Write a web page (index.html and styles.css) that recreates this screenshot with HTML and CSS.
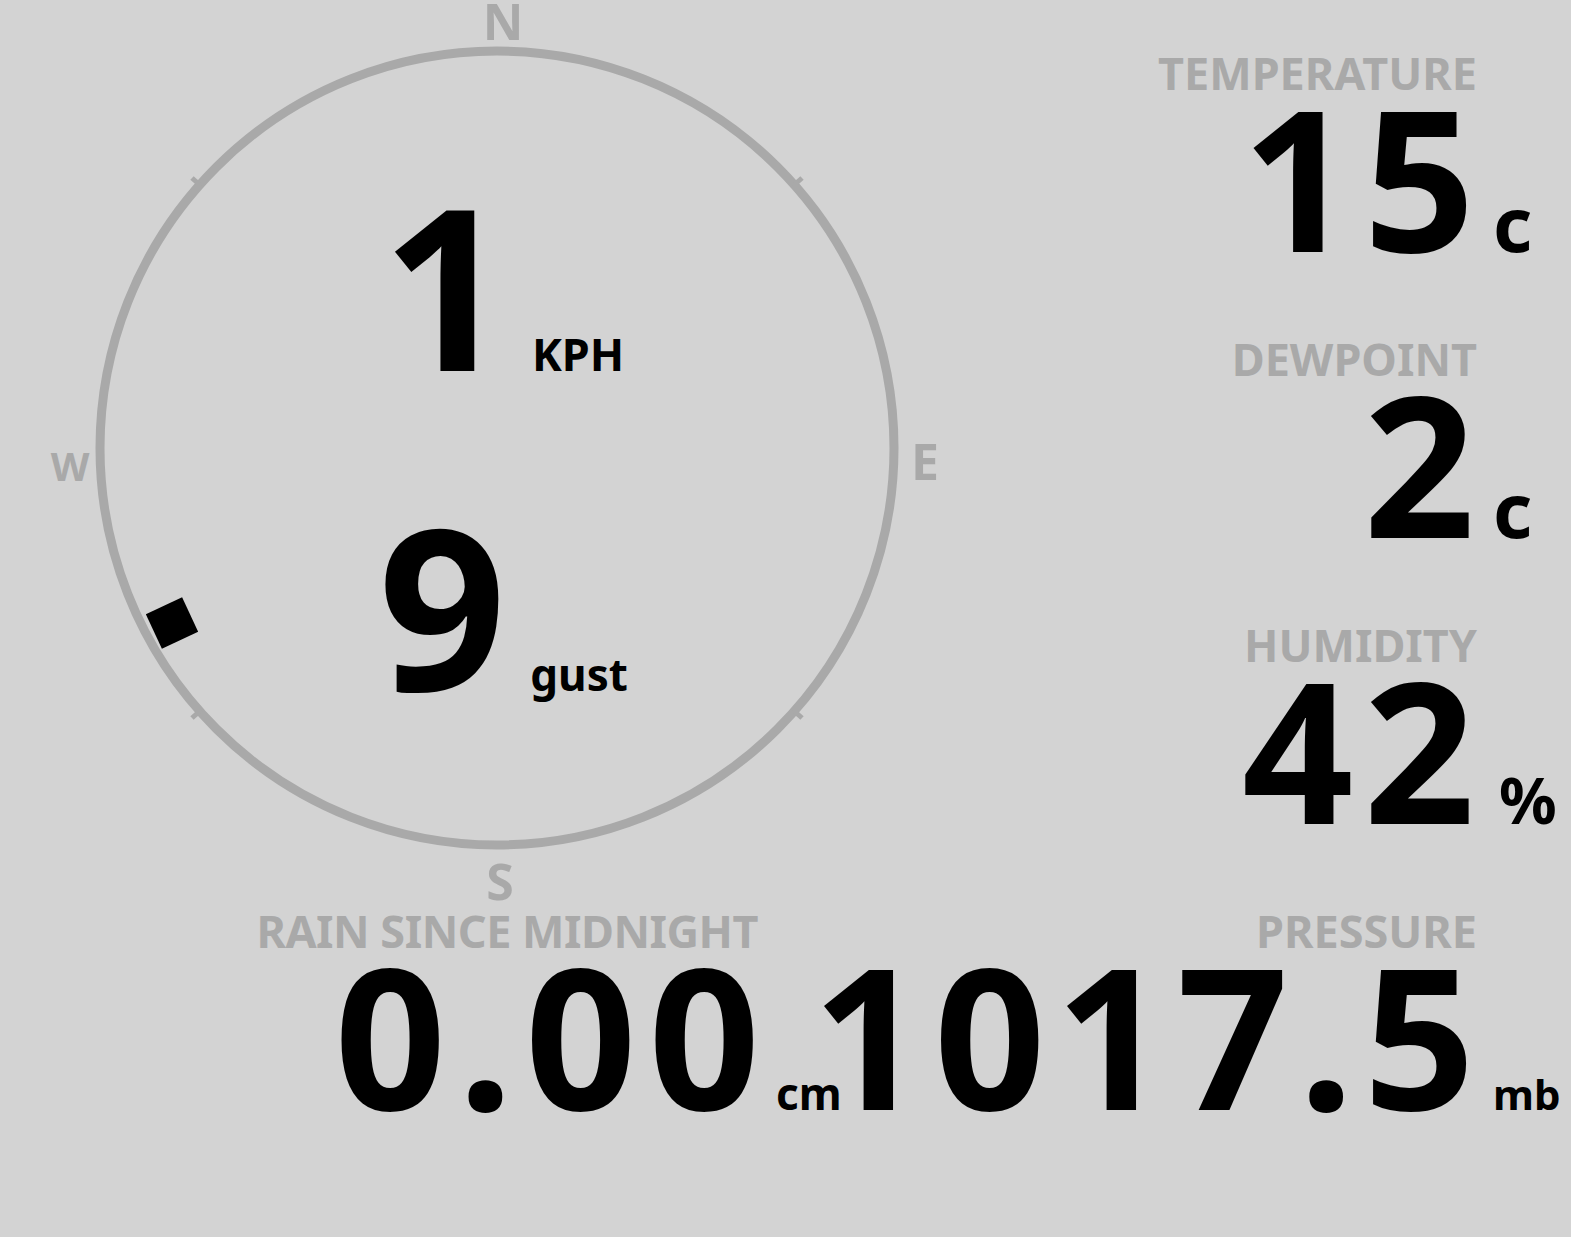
FILE: index.html
```html
<!DOCTYPE html>
<html lang="en">
<head>
    <meta charset="UTF-8">
    <meta name="viewport" content="width=device-width, initial-scale=1.0">
    <title>Weather Station</title>
    <link rel="stylesheet" href="styles.css">
</head>
<body>
    <div class="station">
        <div class="top">
            <div class="compass">
                <svg class="dial" width="1000" height="908" viewBox="0 0 1000 908">
                    <circle cx="497" cy="448" r="397" fill="none" stroke="#a9a9a9" stroke-width="9"></circle>
                    <g stroke="#a9a9a9" stroke-width="5">
                        <line x1="201" y1="186" x2="192" y2="178"></line>
                        <line x1="793" y1="186" x2="802" y2="178"></line>
                        <line x1="793" y1="710" x2="802" y2="718"></line>
                        <line x1="201" y1="710" x2="192" y2="718"></line>
                    </g>
                    <g class="points">
                        <text x="503" y="40">N</text>
                        <text x="925" y="480">E</text>
                        <text x="500" y="900">S</text>
                        <text class="west" x="70" y="481">W</text>
                    </g>
                    <rect x="152" y="604" width="40" height="38" transform="rotate(-25 172 623)" fill="#000"></rect>
                </svg>
                <div class="wind">
                    <div class="wind-row">
                        <span class="wind-value">1</span>
                        <span class="wind-unit">KPH</span>
                    </div>
                    <div class="wind-row">
                        <span class="wind-value">9</span>
                        <span class="wind-unit gust">gust</span>
                    </div>
                </div>
            </div>
            <div class="readings">
                <div class="reading">
                    <div class="label">TEMPERATURE</div>
                    <div class="value-row">
                        <span class="value">15</span>
                        <span class="unit unit-c">c</span>
                    </div>
                </div>
                <div class="reading">
                    <div class="label">DEWPOINT</div>
                    <div class="value-row">
                        <span class="value">2</span>
                        <span class="unit unit-c">c</span>
                    </div>
                </div>
                <div class="reading">
                    <div class="label">HUMIDITY</div>
                    <div class="value-row">
                        <span class="value">42</span>
                        <span class="unit unit-pct">%</span>
                    </div>
                </div>
            </div>
        </div>
        <div class="bottom">
            <div class="reading rain">
                <div class="label">RAIN SINCE MIDNIGHT</div>
                <div class="value-row">
                    <span class="value">0.00</span>
                    <span class="unit unit-cm">cm</span>
                </div>
            </div>
            <div class="reading pressure">
                <div class="label">PRESSURE</div>
                <div class="value-row">
                    <span class="value">1017.5</span>
                    <span class="unit unit-mb">mb</span>
                </div>
            </div>
        </div>
    </div>
</body>
</html>
```

FILE: styles.css
```css
body {
    margin: 0;
    background-color: #d3d3d3;
    font-family: "Noto Sans", sans-serif;
    font-weight: 700;
    color: #000;
}
.station {
    width: 1571px;
}
.top {
    display: grid;
    grid-template-columns: 1000px 1fr;
    height: 908px;
}
.compass {
    position: relative;
    height: 908px;
}
.dial {
    position: absolute;
    left: 0;
    top: 0;
    overflow: visible;
}
.points text {
    fill: #a9a9a9;
    font-family: "Noto Sans", sans-serif;
    font-weight: 700;
    font-size: 50px;
    text-anchor: middle;
}
.points .west {
    font-size: 40px;
}
.wind {
    position: relative;
    padding-top: 195px;
    padding-left: 6px;
    display: flex;
    flex-direction: column;
    align-items: center;
    gap: 141px;
}
.wind-row {
    display: flex;
    align-items: baseline;
    font-size: 224px;
    line-height: 0.8;
}
.wind-unit {
    font-size: 45px;
    margin-left: 22px;
}
.wind-unit.gust {
    font-size: 44px;
    margin-left: 24px;
}
.readings {
    padding-top: 50px;
    display: flex;
    flex-direction: column;
}
.reading {
    height: 286px;
    text-align: right;
}
.label {
    font-size: 45px;
    line-height: 45px;
    color: #a9a9a9;
    padding-right: 94px;
    white-space: nowrap;
}
.value-row {
    display: flex;
    justify-content: flex-end;
    align-items: baseline;
    margin-top: 4px;
}
.value {
    font-size: 195px;
    line-height: 0.8;
    white-space: nowrap;
    letter-spacing: 10px;
    margin-right: -10px;
}
.temp .value {
    letter-spacing: 6px;
}
.unit {
    width: 96px;
    flex-shrink: 0;
    box-sizing: border-box;
    padding-left: 18px;
    text-align: left;
}
.unit-c {
    font-size: 76px;
}
.unit-pct {
    font-size: 64px;
    padding-left: 24px;
}
.unit-cm {
    font-size: 44px;
}
.unit-mb {
    font-size: 42px;
    padding-left: 18px;
}
.bottom {
    display: grid;
    grid-template-columns: 840px 1fr;
}
.rain .label {
    padding-right: 82px;
    letter-spacing: -0.5px;
}
.rain .value {
    letter-spacing: 12px;
    margin-right: -12px;
}
.rain .unit {
    width: 80px;
    padding-left: 16px;
}
.pressure {
    min-width: 0;
}
```
